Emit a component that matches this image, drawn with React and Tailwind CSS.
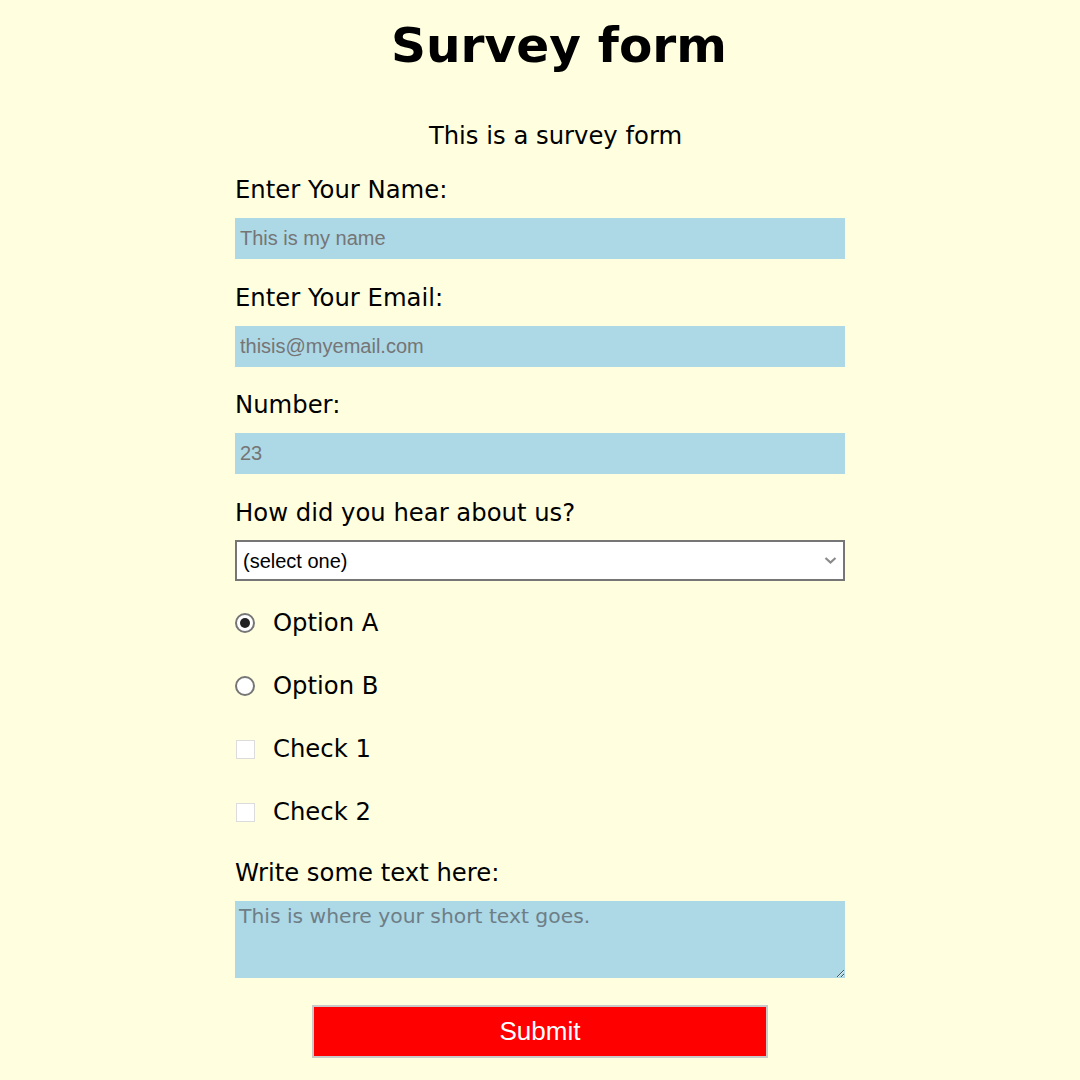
import { useState } from "react";

const labelCls = "block text-[24.3px] leading-[28px] text-black";
const inputCls =
  "block w-full h-[41px] bg-[#add8e6] px-[5px] text-[20px] text-black font-['Liberation_Sans',Arial,sans-serif] placeholder:text-[#757575] outline-none";

const App = () => {
  const [choice, setChoice] = useState("a");
  const [checks, setChecks] = useState({ one: false, two: false });

  return (
    <div className="min-h-screen bg-[#ffffe0] font-['DejaVu_Sans',sans-serif] text-black">
      <h1 className="pt-[17px] pl-[38px] text-center text-[48.6px] leading-[56px] font-bold">
        Survey form
      </h1>
      <p className="mt-[49px] pl-[31px] text-center text-[24.3px] leading-[28px]">
        This is a survey form
      </p>

      <form className="mx-auto mt-[26px] w-[610px]" onSubmit={(e) => e.preventDefault()}>
        {/* Name */}
        <label htmlFor="name" className={labelCls}>
          Enter Your Name:
        </label>
        <input id="name" type="text" placeholder="This is my name" className={`mt-[14px] ${inputCls}`} />

        {/* Email */}
        <label htmlFor="email" className={`mt-[25px] ${labelCls}`}>
          Enter Your Email:
        </label>
        <input id="email" type="email" placeholder="thisis@myemail.com" className={`mt-[14px] ${inputCls}`} />

        {/* Number */}
        <label htmlFor="number" className={`mt-[24px] ${labelCls}`}>
          Number:
        </label>
        <input id="number" type="text" placeholder="23" className={`mt-[14px] ${inputCls}`} />

        {/* Select */}
        <label htmlFor="hear" className={`mt-[25px] ${labelCls}`}>
          How did you hear about us?
        </label>
        <div className="relative mt-[13px]">
          <select
            id="hear"
            className="block w-full h-[41px] appearance-none border-2 border-[#767676] bg-white pl-[6px] text-[20px] text-black font-['Liberation_Sans',Arial,sans-serif] outline-none"
          >
            <option>(select one)</option>
            <option>Friend</option>
            <option>Internet</option>
          </select>
          <svg
            className="pointer-events-none absolute right-[8px] top-[16px] w-[13px] h-[9px] text-[#8a8a8a]"
            viewBox="0 0 13 9"
            fill="none"
          >
            <path d="M1.5 2l5 4.5 5-4.5" stroke="currentColor" strokeWidth="2.2" />
          </svg>
        </div>

        {/* Radios + checks */}
        <div className="mt-[28px] flex flex-col gap-[35px]">
          {[
            { id: "a", text: "Option A" },
            { id: "b", text: "Option B" },
          ].map((opt) => (
            <label key={opt.id} className="flex items-center h-[28px] text-[24.3px] leading-[28px] cursor-pointer">
              <input
                type="radio"
                name="opt"
                className="sr-only"
                checked={choice === opt.id}
                onChange={() => setChoice(opt.id)}
              />
              <span className="flex items-center justify-center w-[20px] h-[20px] rounded-full border-2 border-[#767676] bg-white">
                {choice === opt.id && <span className="w-[10px] h-[10px] rounded-full bg-[#222]"></span>}
              </span>
              <span className="ml-[18px]">{opt.text}</span>
            </label>
          ))}
          {[
            { id: "one", text: "Check 1" },
            { id: "two", text: "Check 2" },
          ].map((c) => (
            <label key={c.id} className="flex items-center h-[28px] text-[24.3px] leading-[28px] cursor-pointer">
              <input
                type="checkbox"
                className="sr-only"
                checked={checks[c.id]}
                onChange={() => setChecks({ ...checks, [c.id]: !checks[c.id] })}
              />
              <span className="ml-[1px] w-[19px] h-[19px] border border-[#dcdcdc] bg-white"></span>
              <span className="ml-[18px]">{c.text}</span>
            </label>
          ))}
        </div>

        {/* Textarea */}
        <label htmlFor="text" className={`mt-[33px] ${labelCls}`}>
          Write some text here:
        </label>
        <textarea
          id="text"
          placeholder="This is where your short text goes."
          className="mt-[14px] block w-full h-[77px] bg-[#add8e6] px-[4px] pt-[3px] text-[20.3px] leading-[24px] font-['DejaVu_Sans',sans-serif] placeholder:text-[#6e7e86] outline-none"
        ></textarea>

        <div className="mt-[27px] flex justify-center">
          <button
            type="submit"
            className="w-[456px] h-[53px] bg-[#ff0000] border-2 border-[#c9c9c9] text-white text-[26px] font-['Liberation_Sans',Arial,sans-serif] cursor-pointer"
          >
            Submit
          </button>
        </div>
      </form>
    </div>
  );
};

export default App;
